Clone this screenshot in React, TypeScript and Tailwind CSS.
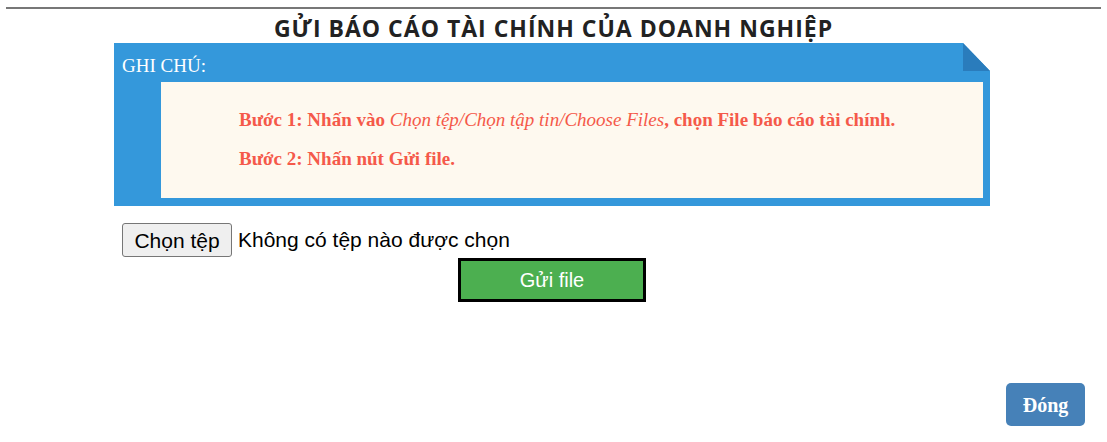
import React from 'react'

const serif = { fontFamily: '"Liberation Serif", "Times New Roman", serif' }

export default function App() {
  return (
    <div className="w-[1107px] h-[442px] bg-white relative overflow-hidden" style={{ fontFamily: '"Liberation Sans", Arial, sans-serif' }}>
      <div className="pt-[7px] px-[6px]">
        <div className="h-[2px] bg-[#777777]" />
      </div>

      <h1
        className="text-center text-[23px] tracking-[1px] font-bold leading-[30px] text-[#222222] mt-[4px]"
        style={{ fontFamily: '"Open Sans", "Noto Sans", sans-serif' }}
      >
        GỬI BÁO CÁO TÀI CHÍNH CỦA DOANH NGHIỆP
      </h1>

      <div className="w-[876px] ml-[114px]">
        {/* Ghi chú box */}
        <div className="relative bg-[#3498db] pl-[47px] pr-[7px] pb-[8px] pt-[39px]">
          <div className="absolute left-[8px] top-[11px] text-white text-[19px] leading-[24px]" style={serif}>
            GHI CHÚ:
          </div>
          {/* folded corner */}
          <svg className="absolute right-0 top-0" width="27" height="28" viewBox="0 0 27 28">
            <polygon points="0,0 27,0 27,28" fill="#ffffff" />
            <polygon points="0,0 0,28 27,28" fill="#2a7cbc" />
          </svg>
          <div className="bg-[#fef9ef] h-[116px] pl-[78px] pt-[26px] text-[#f5594a] font-bold text-[19px]" style={serif}>
            <p className="leading-[24px]">
              Bước 1: Nhấn vào <em className="font-normal">Chọn tệp/Chọn tập tin/Choose Files</em>, chọn File báo cáo tài chính.
            </p>
            <p className="leading-[24px] mt-[15px]">Bước 2: Nhấn nút Gửi file.</p>
          </div>
        </div>

        {/* file input */}
        <div className="flex items-center gap-[6px] mt-[17px] pl-[8px]">
          <button className="h-[34px] w-[110px] bg-[#efefef] border border-[#767676] rounded-[3px] text-[21px] text-black leading-none">
            Chọn tệp
          </button>
          <span className="text-[21px] text-black">Không có tệp nào được chọn</span>
        </div>

        <div className="flex justify-center mt-[1px]">
          <button className="w-[188px] h-[44px] bg-[#4caf50] border-[3px] border-black text-white text-[20px]">
            Gửi file
          </button>
        </div>
      </div>

      <div className="flex justify-end pr-[22px] mt-[81px]">
        <button className="w-[79px] h-[43px] bg-[#4681b8] rounded-[5px] text-white font-bold text-[20px]" style={serif}>
          Đóng
        </button>
      </div>
    </div>
  )
}
